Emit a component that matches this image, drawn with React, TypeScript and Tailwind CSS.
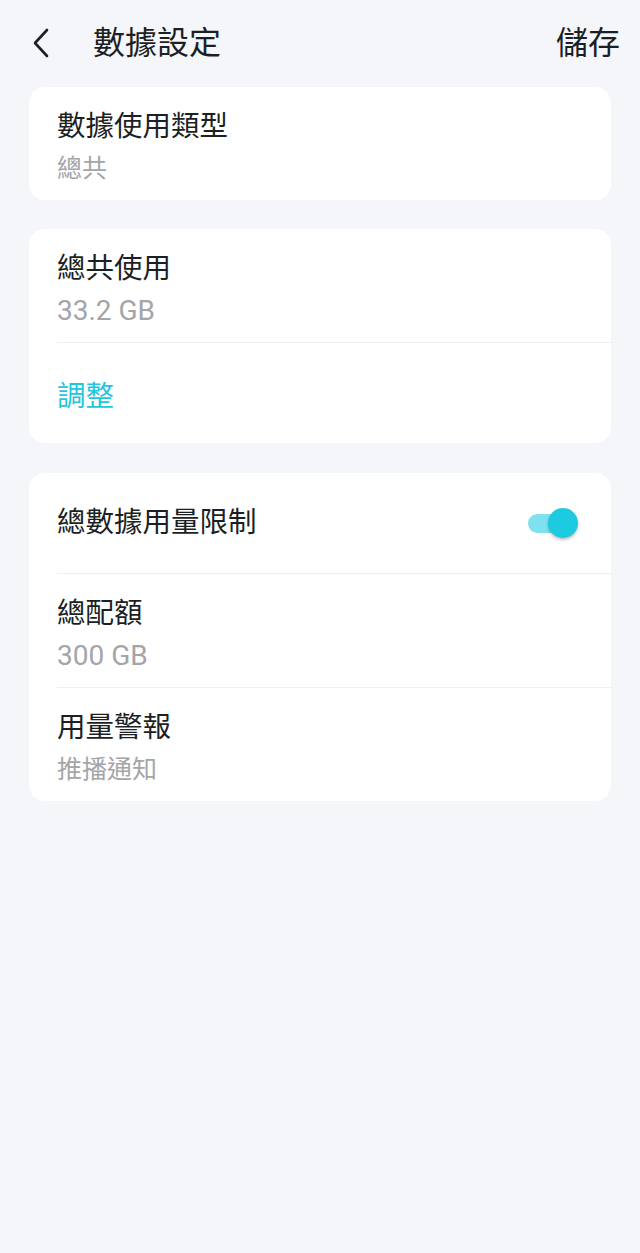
const font = { fontFamily: 'Roboto, "Noto Sans CJK TC", sans-serif' };

function Row({ title, sub, num, border }: { title: string; sub?: string; num?: boolean; border?: boolean }) {
  return (
    <div className={`ml-7 pr-7 ${border ? "border-t border-[#eef0f3]" : ""}`}>
      <div className="pt-[21px] pb-[12px]">
        <div className="text-[28.5px] leading-[38px] text-[#1c1f24]">{title}</div>
        {sub && (
          <div className={`mt-[4px] leading-[38px] text-[#a3a5a8] ${num ? "text-[28px]" : "text-[25px]"}`}>
            {sub}
          </div>
        )}
      </div>
    </div>
  );
}

export default function App() {
  return (
    <div className="min-h-[1253px] bg-[#f4f6fa]" style={font}>
      <header className="flex h-[87px] items-center pl-[28px] pr-[20px] pb-[1px]">
        <svg width="26" height="32" viewBox="0 0 26 32" className="shrink-0">
          <path d="M19 3 L7 16 L19 29" fill="none" stroke="#1c1f24" strokeWidth="2.6" strokeLinecap="round" strokeLinejoin="round" />
        </svg>
        <h1 className="ml-[39px] text-[32px] leading-none text-[#1c1f24]">數據設定</h1>
        <button className="ml-auto text-[32px] leading-none text-[#1c1f24]">儲存</button>
      </header>

      <div className="flex flex-col px-[29px]">
        <section className="rounded-2xl bg-white">
          <Row title="數據使用類型" sub="總共" />
        </section>

        <section className="mt-[29px] rounded-2xl bg-white">
          <Row title="總共使用" sub="33.2 GB" num />
          <div className="ml-7 border-t border-[#eef0f3] pt-[35px] pb-[27px]">
            <span className="text-[28.5px] leading-[38px] text-[#1fc6dc]">調整</span>
          </div>
        </section>

        <section className="mt-[30px] rounded-2xl bg-white">
          <div className="ml-7 flex h-[100px] items-center pr-[33px]">
            <span className="text-[28.5px] leading-[38px] text-[#1c1f24]">總數據用量限制</span>
            <div className="relative ml-auto h-[30px] w-[50px]">
              <div className="absolute left-0 top-[6px] h-[19px] w-[36px] rounded-full bg-[#7fe1ee]" />
              <div className="absolute right-0 top-0 h-[30px] w-[30px] rounded-full bg-[#1ccbe0] shadow-[0_2px_3px_rgba(0,0,0,0.25)]" />
            </div>
          </div>
          <Row title="總配額" sub="300 GB" num border />
          <Row title="用量警報" sub="推播通知" border />
        </section>
      </div>
    </div>
  );
}
